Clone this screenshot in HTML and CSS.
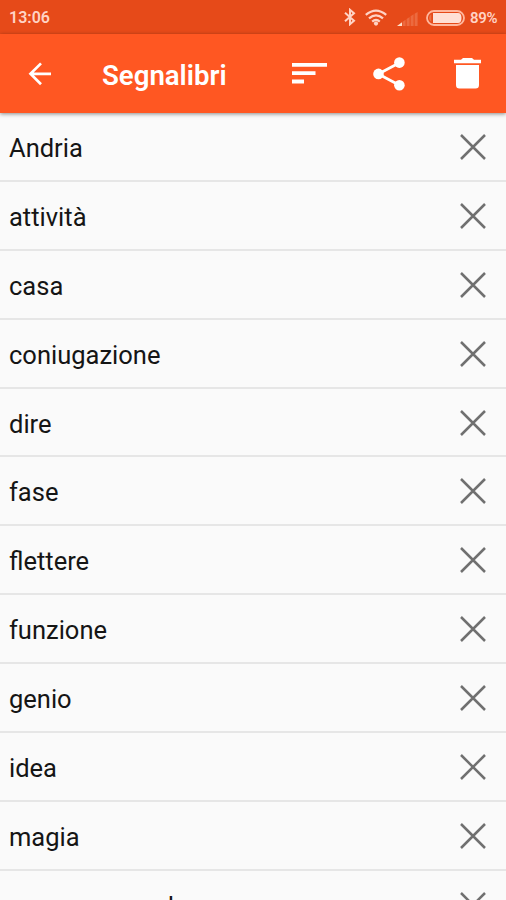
FILE: index.html
```html
<!DOCTYPE html>
<html lang="it">
<head>
<meta charset="utf-8">
<title>Segnalibri</title>
<link rel="stylesheet" href="styles.css">
</head>
<body>
<svg class="defs" width="0" height="0"><symbol id="close" viewBox="0 0 26 26"><path d="M1 1 25 25M25 1 1 25" fill="none" stroke="#707070" stroke-width="2.5"/></symbol></svg>
<div class="screen">
  <div class="status">
    <span class="time">13:06</span>
    <svg class="bluetooth" width="12" height="18" viewBox="0 0 12 18"><path d="M1 4.7 10 12.7 6 16.2V1.8L10 5.2 1 13.2" fill="none" stroke="currentColor" stroke-width="2"/></svg>
    <svg class="wifi" width="22" height="17" viewBox="0 0 22 17"><g fill="none" stroke="currentColor" stroke-width="2.3"><path d="M.8 5.8Q11-2.6 21.2 5.8"/><path d="M4 9.4Q11 3.4 18 9.4"/><path d="M7.2 12.6Q11 9.4 14.8 12.6"/></g><circle cx="11" cy="14.6" r="2.1" fill="currentColor"/></svg>
    <svg class="signal" width="21" height="14" viewBox="0 0 21 14"><path d="M0 14 5 10.2V14Z" fill="#ffe0c8"/><path d="M5.6 14V9.8L8.6 7.7V14ZM9.6 14V7L12.6 5V14ZM13.6 14V4.3L16.6 2.3V14ZM17.6 14V1.7L20.6 0V14Z" fill="#ec6a3f"/></svg>
    <svg class="battery" width="39" height="16" viewBox="0 0 39 16"><rect x="1" y="1" width="37" height="14" rx="7" fill="none" stroke="#ffb79d" stroke-width="1.8"/><path d="M7 3H32Q35.5 3 35.5 8T32 13H7Z" fill="#ffe0d5"/><path d="M5.3 4Q3 5.3 3 8T5.3 12Z" fill="#ed7145"/></svg>
    <span class="percent">89%</span>
  </div>
  <header class="bar">
    <svg class="back" width="24" height="24" viewBox="0 0 24 24"><path d="M23 11.8H2.5M13 1.4 2.5 11.8 13 22.2" fill="none" stroke="#fff" stroke-width="2.7"/></svg>
    <h1>Segnalibri</h1>
    <svg class="sort" width="35" height="21" viewBox="0 0 35 21"><path d="M0 0H35V3.8H0ZM0 8.3H23.5V12.1H0ZM0 16.6H12V20.4H0Z" fill="#fff"/></svg>
    <svg class="share" width="32" height="34" viewBox="0 0 32 34"><path d="M26.5 5.7 5.3 16.9 26.5 28.3" fill="none" stroke="#fff" stroke-width="2.8"/><g fill="#fff"><circle cx="26.4" cy="5.6" r="5.3"/><circle cx="5.5" cy="16.9" r="5.3"/><circle cx="26.4" cy="28.3" r="5.3"/></g></svg>
    <svg class="trash" width="27" height="31" viewBox="0 0 27 31"><path d="M0 1.8H7L9 0H18L20 1.8H27V5.2H0ZM2 7H25V27Q25 30.5 21.5 30.5H5.5Q2 30.5 2 27Z" fill="#fff"/></svg>
  </header>
  <ul class="list">
    <li><span>Andria</span><svg><use href="#close"/></svg></li>
    <li><span>attività</span><svg><use href="#close"/></svg></li>
    <li><span>casa</span><svg><use href="#close"/></svg></li>
    <li><span>coniugazione</span><svg><use href="#close"/></svg></li>
    <li><span>dire</span><svg><use href="#close"/></svg></li>
    <li><span>fase</span><svg><use href="#close"/></svg></li>
    <li><span>flettere</span><svg><use href="#close"/></svg></li>
    <li><span>funzione</span><svg><use href="#close"/></svg></li>
    <li><span>genio</span><svg><use href="#close"/></svg></li>
    <li><span>idea</span><svg><use href="#close"/></svg></li>
    <li><span>magia</span><svg><use href="#close"/></svg></li>
    <li><span>mezzo secondo</span><svg><use href="#close"/></svg></li>
  </ul>
</div>
</body>
</html>
```
FILE: styles.css
```css
* { box-sizing: border-box; }
body { margin: 0; font-family: Roboto, "Liberation Sans", sans-serif; background: #fafafa; }
svg { display: block; flex: none; }
.defs { position: absolute; }
.screen { height: 900px; overflow: hidden; display: flex; flex-direction: column; }
.status {
  height: 34px; flex: none; background: #e64a19; color: #ffd3c5;
  display: flex; align-items: center; padding-left: 9px;
  font-size: 16px; font-weight: 600; line-height: 34px;
}
.time { width: 335px; padding-top: 2px; }
.wifi { margin-left: 9px; }
.signal { margin: 3px 0 0 10px; }
.battery { margin: 1px 0 0 8px; }
.percent { margin-left: 5px; padding-top: 2px; font-size: 15px; letter-spacing: -.3px; }
.bar {
  height: 79px; flex: none; background: #ff5722; color: #fff;
  display: flex; align-items: center; padding-left: 28px;
  position: relative; box-shadow: 0 1px 4px rgba(0, 0, 0, .45);
}
h1 { margin: 4px 0 0 50px; width: 190px; font-size: 27.6px; line-height: 36px; font-weight: 600; }
.share { margin-left: 46px; }
.trash { margin-left: 49px; }
.list { list-style: none; margin: 0; padding: 0; }
li {
  height: 68.9px; border-bottom: 2px solid #e6e6e6; padding: 1px 20px 0 9px;
  display: flex; align-items: center; justify-content: space-between;
  font-size: 25.5px; line-height: 32px; color: #151515;
}
li span { padding-top: 2px; }
li svg { width: 26px; height: 26px; }
```
